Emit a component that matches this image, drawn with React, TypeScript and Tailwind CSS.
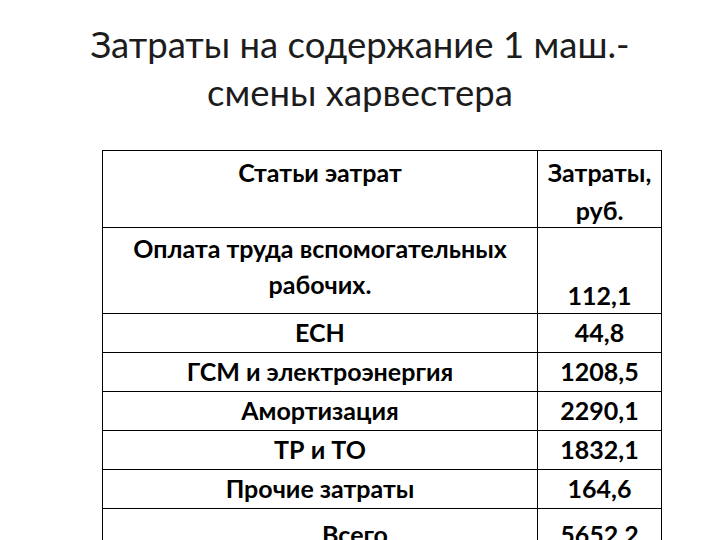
export default function App() {
  const rows: { name: string; value: string }[] = [
    { name: "ЕСН", value: "44,8" },
    { name: "ГСМ и электроэнергия", value: "1208,5" },
    { name: "Амортизация", value: "2290,1" },
    { name: "ТР и ТО", value: "1832,1" },
    { name: "Прочие затраты", value: "164,6" },
  ];

  return (
    <div className="w-[720px] h-[540px] overflow-hidden bg-white font-['Lato',sans-serif]">
      {/* Заголовок */}
      <div className="pt-[20px] text-center text-[36.5px] leading-[48px] text-[#1c1c1c]">
        <div>Затраты на содержание 1 маш.-</div>
        <div>смены харвестера</div>
      </div>

      {/* Таблица */}
      <div className="mt-[34px] ml-[102px] grid w-fit grid-cols-[435px_124px] border-l border-t border-black text-[25px] font-bold text-black">
        <div className="h-[77px] border-r border-b border-black pt-[2px] text-center leading-[38px]">
          Статьи эатрат
        </div>
        <div className="h-[77px] border-r border-b border-black pt-[2px] text-center leading-[38px]">
          <div>Затраты,</div>
          <div>руб.</div>
        </div>

        <div className="h-[86px] border-r border-b border-black pt-[2px] text-center leading-[36px]">
          <div>Оплата труда вспомогательных</div>
          <div>рабочих.</div>
        </div>
        <div className="h-[86px] border-r border-b border-black flex items-end justify-center leading-[36px]">
          112,1
        </div>

        {rows.map((r) => (
          <>
            <div key={r.name} className="h-[39px] border-r border-b border-black flex items-center justify-center">
              {r.name}
            </div>
            <div key={r.value} className="h-[39px] border-r border-b border-black flex items-center justify-center">
              {r.value}
            </div>
          </>
        ))}

        <div className="h-[44px] border-r border-b border-black flex items-center justify-center pl-[70px] pt-[8px]">
          Всего
        </div>
        <div className="h-[44px] border-r border-b border-black flex items-center justify-center pt-[8px]">
          5652,2
        </div>
      </div>
    </div>
  );
}
